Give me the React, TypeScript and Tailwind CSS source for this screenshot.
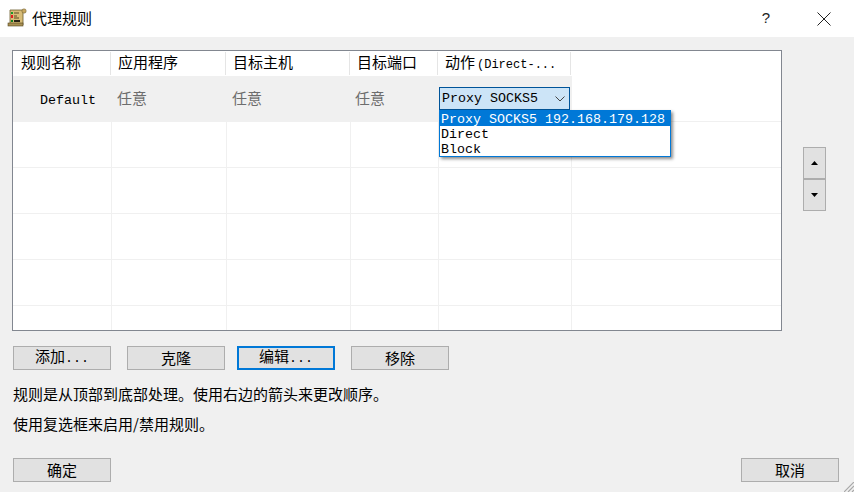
import React from "react";

const CJK = "font-['SimSun','Noto_Sans_CJK_SC','Liberation_Mono',monospace]";

const COLUMNS = [
  { title: "规则名称", width: "w-[98px]", rowWidth: "w-[99px]" },
  { title: "应用程序", width: "w-[115px]", rowWidth: "w-[115px]" },
  { title: "目标主机", width: "w-[124px]", rowWidth: "w-[124px]" },
  { title: "目标端口", width: "w-[88px]", rowWidth: "w-[88px]" },
  { title: "动作", width: "w-[133px]", rowWidth: "w-[133px]" },
];

const Latin = ({ children, className = "text-[13.33px]" }: { children: React.ReactNode; className?: string }) => (
  <span className={`font-['Liberation_Mono',monospace] ${className}`}>{children}</span>
);

const Button = ({
  label,
  focused,
  className = "",
}: {
  label: React.ReactNode;
  focused?: boolean;
  className?: string;
}) => (
  <div
    className={`w-[98px] h-[24px] flex items-center justify-center bg-[#e1e1e1] text-black text-[15px] leading-none pb-[2px] ${
      focused ? "border-2 border-[#0078d7]" : "border border-[#adadad]"
    } ${className}`}
  >
    <span>{label}</span>
  </div>
);

const ScrollIcon = () => (
  <svg width="20" height="20" viewBox="0 0 20 20" className="block -mt-[1px]">
    <path d="M3 2h13v15H1l2-2z" fill="#d8bd78" stroke="#6b5a2c" strokeWidth="0.8" />
    <rect x="15" y="1" width="4" height="4" rx="1.5" fill="#c8a860" stroke="#7d6a38" strokeWidth="0.7" />
    <rect x="1" y="15" width="15" height="3" fill="#a88f52" stroke="#55461f" strokeWidth="0.6" />
    <rect x="4" y="4" width="2" height="2" fill="#1a9a2a" />
    <rect x="4" y="7" width="2" height="3" fill="#e02020" />
    <rect x="4" y="12" width="2" height="2" fill="#108020" />
    <path d="M7 5h5M7 8h3M7 10h5" stroke="#5a4a20" strokeWidth="1" />
    <rect x="7" y="12" width="6" height="2" fill="#2a2415" />
  </svg>
);

const Row = ({ active }: { active?: boolean }) => (
  <div className="flex h-[46px] shrink-0">
    {COLUMNS.map((c) => (
      <div
        key={c.title}
        className={`${c.rowWidth} shrink-0 border-r border-b border-[#f0f0f0] ${active ? "bg-[#f0f0f0]" : ""}`}
      />
    ))}
    <div className="flex-1 border-b border-[#f0f0f0]" />
  </div>
);

export default function App() {
  return (
    <div className={`relative w-[854px] h-[492px] overflow-hidden bg-[#f0f0f0] text-black text-[15px] ${CJK}`}>
      {/* title bar */}
      <div className="h-[37px] bg-white flex items-center pl-[7px] pr-[23px]">
        <ScrollIcon />
        <span className="ml-[5px] text-[15px]">代理规则</span>
        <span className="ml-auto font-['Liberation_Sans',sans-serif] text-[15px] text-[#222] mr-[47px]">?</span>
        <svg width="14" height="14" viewBox="0 0 14 14">
          <path d="M0.5 0.5l13 13M13.5 0.5l-13 13" stroke="#222" strokeWidth="1" />
        </svg>
      </div>

      {/* table and arrows */}
      <div className="flex mt-[13px] ml-[12px]">
        <div className="relative w-[770px] h-[281px] bg-white border border-[#828790] overflow-hidden">
          <div className="flex h-[25px]">
            {COLUMNS.map((c, i) => (
              <div
                key={c.title}
                className={`${c.width} shrink-0 flex items-center pb-[2px] ${i === 0 ? "pl-[8px]" : "pl-[7px]"}`}
              >
                <span>
                  {c.title}
                  {i === 4 && <Latin className="text-[12px] ml-[2px]">(Direct-...</Latin>}
                </span>
                <span className="ml-auto h-full w-[1px] bg-[#e5e5e5] mt-[2px]" />
              </div>
            ))}
          </div>
          <Row active />
          <Row />
          <Row />
          <Row />
          <Row />
          <Row />
          {/* row 1 contents */}
          <div className="absolute left-0 top-[25px] h-[45px] flex items-center">
            <div className="w-[98px] pl-[27px]">
              <Latin>Default</Latin>
            </div>
            <div className="w-[115px] pl-[6px] text-[#6d6d6d]">任意</div>
            <div className="w-[124px] pl-[6px] text-[#6d6d6d]">任意</div>
            <div className="w-[88px] pl-[5px] text-[#6d6d6d]">任意</div>
          </div>
        </div>
        <div className="ml-[21px] mt-[97px] w-[23px] h-[64px] flex flex-col">
          <div className="h-[32px] bg-[#e1e1e1] border border-[#adadad] flex items-center justify-center">
            <svg width="7" height="4" viewBox="0 0 7 4"><path d="M3.5 0L7 4H0z" fill="#000" /></svg>
          </div>
          <div className="h-[32px] bg-[#e1e1e1] border border-[#adadad] flex items-center justify-center">
            <svg width="7" height="4" viewBox="0 0 7 4"><path d="M0 0h7L3.5 4z" fill="#000" /></svg>
          </div>
        </div>
      </div>

      {/* action buttons */}
      <div className="flex mt-[15px] ml-[13px]">
        <Button label={<>添加<Latin>...</Latin></>} />
        <Button label="克隆" className="ml-[16px]" />
        <Button label={<>编辑<Latin>...</Latin></>} focused className="ml-[12px]" />
        <Button label="移除" className="ml-[16px]" />
      </div>

      <p className="ml-[13px] mt-[14px] h-[20px] leading-[20px] text-[15px]">规则是从顶部到底部处理。使用右边的箭头来更改顺序。</p>
      <p className="ml-[13px] mt-[10px] h-[20px] leading-[20px] text-[15px]">使用复选框来启用/禁用规则。</p>

      {/* footer */}
      <div className="flex justify-between mt-[24px] ml-[13px] mr-[15px]">
        <Button label="确定" />
        <Button label="取消" />
      </div>

      {/* open combo box over the table */}
      <div className="absolute left-[439px] top-[87px] w-[131px] h-[23px] bg-[#cce4f7] border border-[#005499] flex items-center pl-[2px] pr-[4px] pt-[1px]">
        <Latin>Proxy SOCKS5</Latin>
        <svg width="10" height="6" viewBox="0 0 10 6" className="ml-auto">
          <path d="M0.5 0.5L5 5l4.5-4.5" fill="none" stroke="#444" strokeWidth="1" />
        </svg>
      </div>
      <div className="absolute left-[439px] top-[110px] w-[232px] h-[47px] bg-white border border-[#0078d7] shadow-[2px_2px_3px_rgba(0,0,0,0.45)] flex flex-col leading-[15px]">
        <div className="h-[15px] bg-[#0078d7] text-white pl-[1px] pt-[1px] whitespace-nowrap flex items-center">
          <Latin>Proxy SOCKS5 192.168.179.128</Latin>
        </div>
        <div className="h-[15px] pl-[1px] pt-[1px] flex items-center"><Latin>Direct</Latin></div>
        <div className="h-[15px] pl-[1px] pt-[1px] flex items-center"><Latin>Block</Latin></div>
      </div>

      {/* resize grip */}
      <svg width="10" height="10" viewBox="0 0 10 10" className="absolute right-0 bottom-0">
        <path d="M0 10L10 0M4 10l6-6M8 10l2-2" stroke="#a8a8a8" strokeWidth="1.2" />
      </svg>
    </div>
  );
}
